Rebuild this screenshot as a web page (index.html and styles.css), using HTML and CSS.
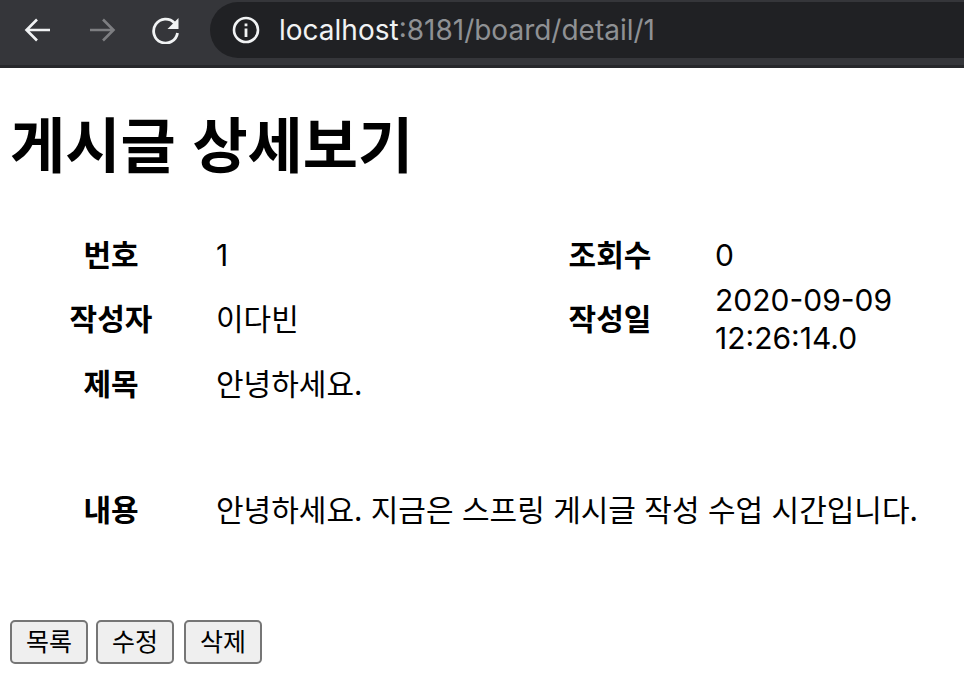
FILE: index.html
```html
<!DOCTYPE html>
<html lang="ko">
<head>
<meta charset="utf-8">
<title>게시글 상세보기</title>
<link rel="stylesheet" href="styles.css">
</head>
<body>
<header class="toolbar">
  <div class="nav-icons">
    <svg class="icon" width="28" height="28" viewBox="0 0 28 28"><path d="M26 14H3M13 3.500 2.500 14 13 24.500" fill="none" stroke="#f1f3f4" stroke-width="2.600"/></svg>
    <svg class="icon" width="28" height="28" viewBox="0 0 28 28"><path d="M2 14h23M15 3.500 25.500 14 15 24.500" fill="none" stroke="#7d7e81" stroke-width="2.600"/></svg>
    <svg class="icon" width="28" height="28" viewBox="0 0 28 28"><path d="M22.500 7A12 12 0 1 0 25.500 17" fill="none" stroke="#f1f3f4" stroke-width="2.800"/><path d="M26.500 2v11h-11z" fill="#f1f3f4"/></svg>
  </div>
  <div class="address">
    <svg class="info" width="28" height="28" viewBox="0 0 28 28"><circle cx="14" cy="14" r="12" fill="none" stroke="#f1f3f4" stroke-width="2.600"/><path d="M12.600 12.500h2.800V21h-2.800zM12.600 7.500h2.800v2.800h-2.800z" fill="#f1f3f4"/></svg>
    <span class="host">localhost</span><span class="path">:8181/board/detail/1</span>
  </div>
</header>
<main class="page">
  <h1 class="title">게시글 상세보기</h1>
  <table class="detail">
    <colgroup>
      <col class="c-label"><col class="c-value"><col class="c-label2"><col class="c-value2">
    </colgroup>
    <tr class="r1"><th>번호</th><td class="num">1</td><th>조회수</th><td class="num far">0</td></tr>
    <tr class="r2"><th>작성자</th><td>이다빈</td><th>작성일</th><td class="num far">2020-09-09 12:26:14.0</td></tr>
    <tr class="r3"><th>제목</th><td colspan="3">안녕하세요.</td></tr>
    <tr class="r4"><th>내용</th><td colspan="3" class="nowrap">안녕하세요. 지금은 스프링 게시글 작성 수업 시간입니다.</td></tr>
  </table>
  <div class="actions">
    <button class="btn" type="button">목록</button>
    <button class="btn" type="button">수정</button>
    <button class="btn b3" type="button">삭제</button>
  </div>
</main>
</body>
</html>
```
FILE: styles.css
```css
* { box-sizing: border-box; }
html, body { margin: 0; padding: 0; background: #fff; }
body { width: 964px; height: 680px; overflow: hidden; font-family: "Noto Sans CJK KR", "Noto Sans", sans-serif; color: #000; }
.toolbar { height: 68px; background: #35363a; border-bottom: 3px solid #27282b; display: flex; padding-top: 2px; }
.nav-icons { width: 210px; display: flex; align-items: center; gap: 36px; padding: 0 0 0 24px; flex: none; height: 56px; }
.icon { flex: none; }
.address { flex: 1; height: 56px; background: #202124; border-radius: 28px 0 0 28px; display: flex; align-items: center; padding-left: 22px; font-family: "Inter", "Liberation Sans", sans-serif; font-size: 28px; }
.info { margin-right: 19px; flex: none; }
.host { color: #f1f3f4; }
.path { color: #8f9194; }
.page { padding: 0 10px; }
.title { margin: 0; padding-top: 31px; font-size: 60px; line-height: 86px; font-weight: 700; }
.detail { border-collapse: collapse; table-layout: fixed; width: 924px; margin-top: 45px; font-size: 30px; line-height: 38px; }
.detail th, .detail td { padding: 0; vertical-align: middle; font-weight: 400; text-align: left; }
.detail th { font-weight: 700; text-align: center; padding-bottom: 4px; }
.c-label { width: 202px; }
.c-value { width: 301px; }
.c-label2 { width: 194px; }
.c-value2 { width: 227px; }
.detail td { padding-left: 4px; padding-bottom: 4px; }
.detail td.num { font-family: "Inter", "Noto Sans CJK KR", sans-serif; padding-bottom: 0; }
.detail td.far { padding-left: 8px; }
.r1 { height: 50px; }
.r2 { height: 78px; }
.r3 { height: 52px; }
.r4 { height: 200px; }
.nowrap { white-space: nowrap; }
.actions { display: flex; gap: 8px; margin-top: 10px; }
.btn { width: 78px; height: 44px; padding: 0 0 5px; font-family: inherit; font-size: 25px; line-height: 36px; color: #000; background: #efefef; border: 2px solid #767676; border-radius: 5px; }
.b3 { margin-left: 2px; }
```
